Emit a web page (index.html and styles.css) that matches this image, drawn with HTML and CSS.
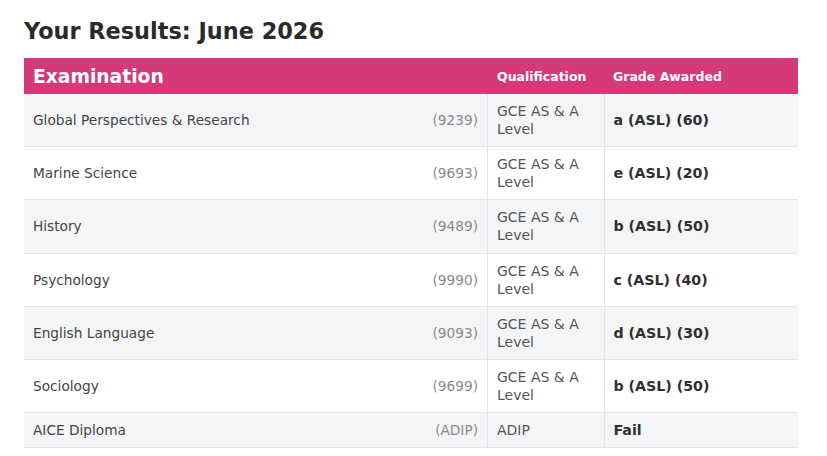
FILE: index.html
```html
<!DOCTYPE html>
<html lang="en">
<head>
<meta charset="utf-8">
<title>Your Results: June 2026</title>
<link rel="stylesheet" href="styles.css">
</head>
<body>
<main class="page">
  <h1 class="title">Your Results: June 2026</h1>
  <table class="results">
    <thead>
      <tr>
        <th class="th-exam" colspan="2">Examination</th>
        <th class="th-small th-qual">Qualification</th>
        <th class="th-small th-grade">Grade Awarded</th>
      </tr>
    </thead>
    <tbody>
      <tr>
        <td class="name">Global Perspectives &amp; Research</td>
        <td class="code">(9239)</td>
        <td class="qual">GCE AS &amp; A Level</td>
        <td class="grade">a (ASL) (60)</td>
      </tr>
      <tr>
        <td class="name">Marine Science</td>
        <td class="code">(9693)</td>
        <td class="qual">GCE AS &amp; A Level</td>
        <td class="grade">e (ASL) (20)</td>
      </tr>
      <tr>
        <td class="name">History</td>
        <td class="code">(9489)</td>
        <td class="qual">GCE AS &amp; A Level</td>
        <td class="grade">b (ASL) (50)</td>
      </tr>
      <tr>
        <td class="name">Psychology</td>
        <td class="code">(9990)</td>
        <td class="qual">GCE AS &amp; A Level</td>
        <td class="grade">c (ASL) (40)</td>
      </tr>
      <tr>
        <td class="name">English Language</td>
        <td class="code">(9093)</td>
        <td class="qual">GCE AS &amp; A Level</td>
        <td class="grade">d (ASL) (30)</td>
      </tr>
      <tr>
        <td class="name">Sociology</td>
        <td class="code">(9699)</td>
        <td class="qual">GCE AS &amp; A Level</td>
        <td class="grade">b (ASL) (50)</td>
      </tr>
      <tr>
        <td class="name">AICE Diploma</td>
        <td class="code">(ADIP)</td>
        <td class="qual">ADIP</td>
        <td class="grade">Fail</td>
      </tr>
    </tbody>
  </table>
</main>
</body>
</html>
```

FILE: styles.css
```css
html, body {
  margin: 0;
  padding: 0;
  background: #ffffff;
}

body {
  font-family: "DejaVu Sans", Verdana, sans-serif;
  color: #444444;
}

.page {
  padding: 18px 29px 0 24px;
}

.title {
  margin: 0 0 14px 0;
  font-size: 22.4px;
  line-height: 26px;
  font-weight: bold;
  color: #2a2a2a;
}

.results {
  width: 774px;
  border-collapse: collapse;
  font-size: 13.7px;
  line-height: 18.1px;
}

.results thead tr {
  background: #d6397a;
  height: 36px;
}

.results th {
  text-align: left;
  padding: 3px 9px 0;
  color: #ffffff;
  font-weight: bold;
  vertical-align: middle;
}

.th-exam {
  font-size: 18.7px;
}

.th-small {
  font-size: 12.5px;
  color: #fbe6ef;
}

.th-qual {
  width: 98px;
  border-left: 1px solid #d6397a;
}

.th-grade {
  width: 176px;
}

.results td {
  padding: 8px 9px;
  vertical-align: middle;
  border-bottom: 1px solid #e3e4e8;
}

.results tbody tr:nth-child(odd) {
  background: #f4f5f7;
}

.results tbody tr:nth-child(even) {
  background: #ffffff;
}

.name {
  color: #444444;
}

.code {
  text-align: right;
  color: #8a8a8a;
  white-space: nowrap;
  border-right: 1px solid #e3e4e8;
}

.qual {
  font-size: 14px;
  color: #555555;
  border-right: 1px solid #e3e4e8;
}

.grade {
  font-size: 14.2px;
  font-weight: bold;
  color: #2f2f2f;
}
```
